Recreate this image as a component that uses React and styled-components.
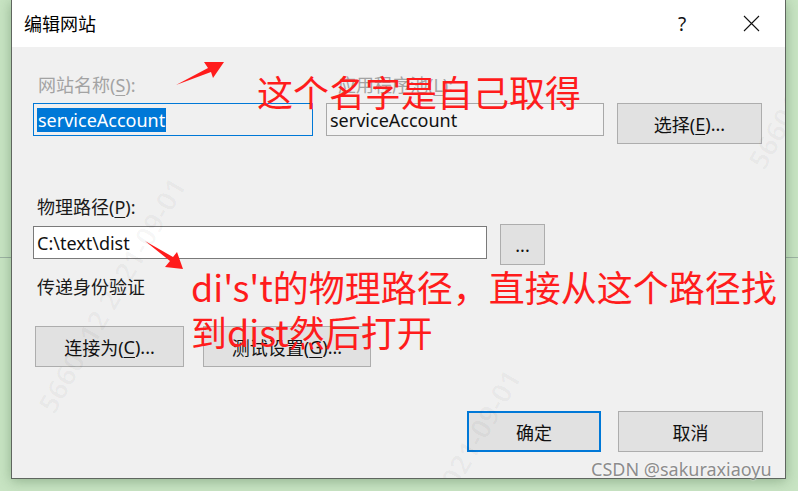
import React from "react"
import styled, { createGlobalStyle } from "styled-components"

const GlobalStyle = createGlobalStyle`
  html, body {
    margin: 0;
    padding: 0;
  }
  body {
    font-family: "Noto Sans", "Noto Sans CJK SC", sans-serif;
  }
`

const Page = styled.div`
  position: relative;
  width: 798px;
  height: 491px;
  overflow: hidden;
  background: linear-gradient(
    to bottom,
    #c8e4c3 257px,
    #9db2a3 257px,
    #9db2a3 258px,
    #c8e4c3 258px
  );
`

const Dialog = styled.div`
  position: relative;
  margin-left: 11px;
  width: 773px;
  height: 478px;
  border: 1px solid #5f665f;
  border-top: none;
  background: #f0f0f0;
  box-shadow: 0 2px 12px rgba(40, 80, 40, 0.35);
  display: flex;
  flex-direction: column;
  overflow: hidden;
`

const TitleBar = styled.div`
  height: 47px;
  background: #fff;
  display: flex;
  align-items: center;
  padding-left: 12px;
  flex-shrink: 0;
`

const Title = styled.div`
  flex: 1;
  font-size: 18px;
  color: #000;
  line-height: 24px;
`

const TitleButton = styled.div`
  width: ${(p) => p.$w}px;
  height: 47px;
  display: flex;
  align-items: center;
  justify-content: center;
  font-size: 19px;
  color: #111;
`

const Body = styled.div`
  position: relative;
  flex: 1;
  padding: 26px 0 0 21px;
  display: flex;
  flex-direction: column;
`

const LabelRow = styled.div`
  display: flex;
  height: 24px;
  margin-bottom: 6px;
`

const Label = styled.div`
  font-size: 18px;
  line-height: 24px;
  color: ${(p) => (p.$disabled ? "#a3a3a3" : "#1a1a1a")};
  width: ${(p) => (p.$w ? `${p.$w}px` : "auto")};
  padding-left: ${(p) => p.$pl || 0}px;
  margin-top: ${(p) => p.$mt || 0}px;
  height: 24px;
  white-space: nowrap;
`

const FieldRow = styled.div`
  display: flex;
  gap: 13px;
  align-items: flex-start;
  height: 41px;
  margin-top: ${(p) => p.$mt || 0}px;
`

const Field = styled.div`
  box-sizing: border-box;
  width: ${(p) => p.$w}px;
  height: 33px;
  margin-top: ${(p) => p.$mt || 0}px;
  border: 1px solid ${(p) => p.$border};
  background: ${(p) => p.$bg};
  display: flex;
  align-items: center;
  padding-left: 3px;
  font-size: 18px;
  color: #111;
  white-space: nowrap;
`

const Selected = styled.span`
  background: #0078d7;
  color: #fff;
  line-height: 24px;
  padding: 0 1px;
`

const Button = styled.div`
  box-sizing: border-box;
  width: ${(p) => p.$w}px;
  height: 41px;
  background: #e1e1e1;
  border: ${(p) => (p.$primary ? "2px solid #0078d7" : "1px solid #adadad")};
  display: flex;
  align-items: center;
  justify-content: center;
  font-size: 18px;
  color: #111;
  white-space: nowrap;
`

const ButtonRow = styled.div`
  display: flex;
  gap: ${(p) => p.$gap}px;
  margin-top: ${(p) => p.$mt}px;
  padding-left: ${(p) => p.$pl || 0}px;
`

const Underline = styled.span`
  text-decoration: underline;
  text-underline-offset: 3px;
`

const Watermark = styled.div`
  position: absolute;
  left: ${(p) => p.$x}px;
  top: ${(p) => p.$y}px;
  transform: rotate(-60deg);
  transform-origin: left center;
  font-size: 28px;
  line-height: 30px;
  font-weight: 700;
  color: rgba(0, 0, 0, 0.028);
  white-space: nowrap;
  pointer-events: none;
`

const Note = styled.div`
  position: absolute;
  left: ${(p) => p.$x}px;
  top: ${(p) => p.$y}px;
  font-size: 36px;
  line-height: 45px;
  color: #ff1c1c;
  white-space: nowrap;
  font-family: "Noto Sans CJK SC", sans-serif;
`

const Arrows = styled.svg`
  position: absolute;
  left: 0;
  top: 0;
  pointer-events: none;
`

const Credit = styled.div`
  position: absolute;
  left: 591px;
  top: 457px;
  font-size: 18px;
  line-height: 24px;
  color: #8c8c8c;
  font-family: "Noto Sans", sans-serif;
  text-shadow: 0 0 2px #fff;
  white-space: nowrap;
`

const CloseIcon = () => (
  <svg width="17" height="17" viewBox="0 0 17 17">
    <path d="M1 1 L16 16 M16 1 L1 16" stroke="#111" strokeWidth="1.1" fill="none" />
  </svg>
)

export default function App() {
  return (
    <>
      <GlobalStyle />
      <Page>
        <Dialog>
          <TitleBar>
            <Title>编辑网站</Title>
            <TitleButton $w={70}>?</TitleButton>
            <TitleButton $w={68}>
              <CloseIcon />
            </TitleButton>
          </TitleBar>
          <Body>
            <Watermark $x={33} $y={348}>5660112 2021-09-01</Watermark>
            <Watermark $x={368} $y={540}>5660112 2021-09-01</Watermark>
            <Watermark $x={743} $y={104}>5660112 2021-09-01</Watermark>
            <LabelRow>
              <Label $disabled $w={293} $pl={5}>
                网站名称(<Underline>S</Underline>):
              </Label>
              <Label $disabled $pl={7}>
                应用程序池(<Underline>L</Underline>):
              </Label>
            </LabelRow>
            <FieldRow>
              <Field $w={280} $border="#0078d7" $bg="#f0f0f0">
                <Selected>serviceAccount</Selected>
              </Field>
              <Field $w={278} $border="#a8a8a8" $bg="#f3f3f3">
                serviceAccount
              </Field>
              <Button $w={145}>
                选择(<Underline>E</Underline>)...
              </Button>
            </FieldRow>
            <Label $mt={51} $pl={4}>
              物理路径(<Underline>P</Underline>):
            </Label>
            <FieldRow $mt={5}>
              <Field $w={454} $mt={2} $border="#7a7a7a" $bg="#fff">
                C:\text\dist
              </Field>
              <Button $w={45}>...</Button>
            </FieldRow>
            <Label $mt={10} $pl={4}>
              传递身份验证
            </Label>
            <ButtonRow $gap={19} $mt={27} $pl={2}>
              <Button $w={149}>
                连接为(<Underline>C</Underline>)...
              </Button>
              <Button $w={168}>
                测试设置(<Underline>G</Underline>)...
              </Button>
            </ButtonRow>
            <ButtonRow $gap={17} $mt={44} $pl={434}>
              <Button $w={134} $primary>
                确定
              </Button>
              <Button $w={145}>取消</Button>
            </ButtonRow>
          </Body>
        </Dialog>

        <Arrows width="798" height="491" viewBox="0 0 798 491">
          <polygon
            points="176,85 208,68 204,62 224,62 213,78 211,72"
            fill="#ff1c1c"
          />
          <polygon
            points="145,241 170,261 165,267 183,269 177,252 173,257"
            fill="#ff1c1c"
          />
        </Arrows>
        <Note $x={257} $y={69}>这个名字是自己取得</Note>
        <Note $x={191} $y={264}>
          di's't的物理路径，直接从这个路径找
          <br />
          到dist然后打开
        </Note>
        <Credit>CSDN @sakuraxiaoyu</Credit>
      </Page>
    </>
  )
}
